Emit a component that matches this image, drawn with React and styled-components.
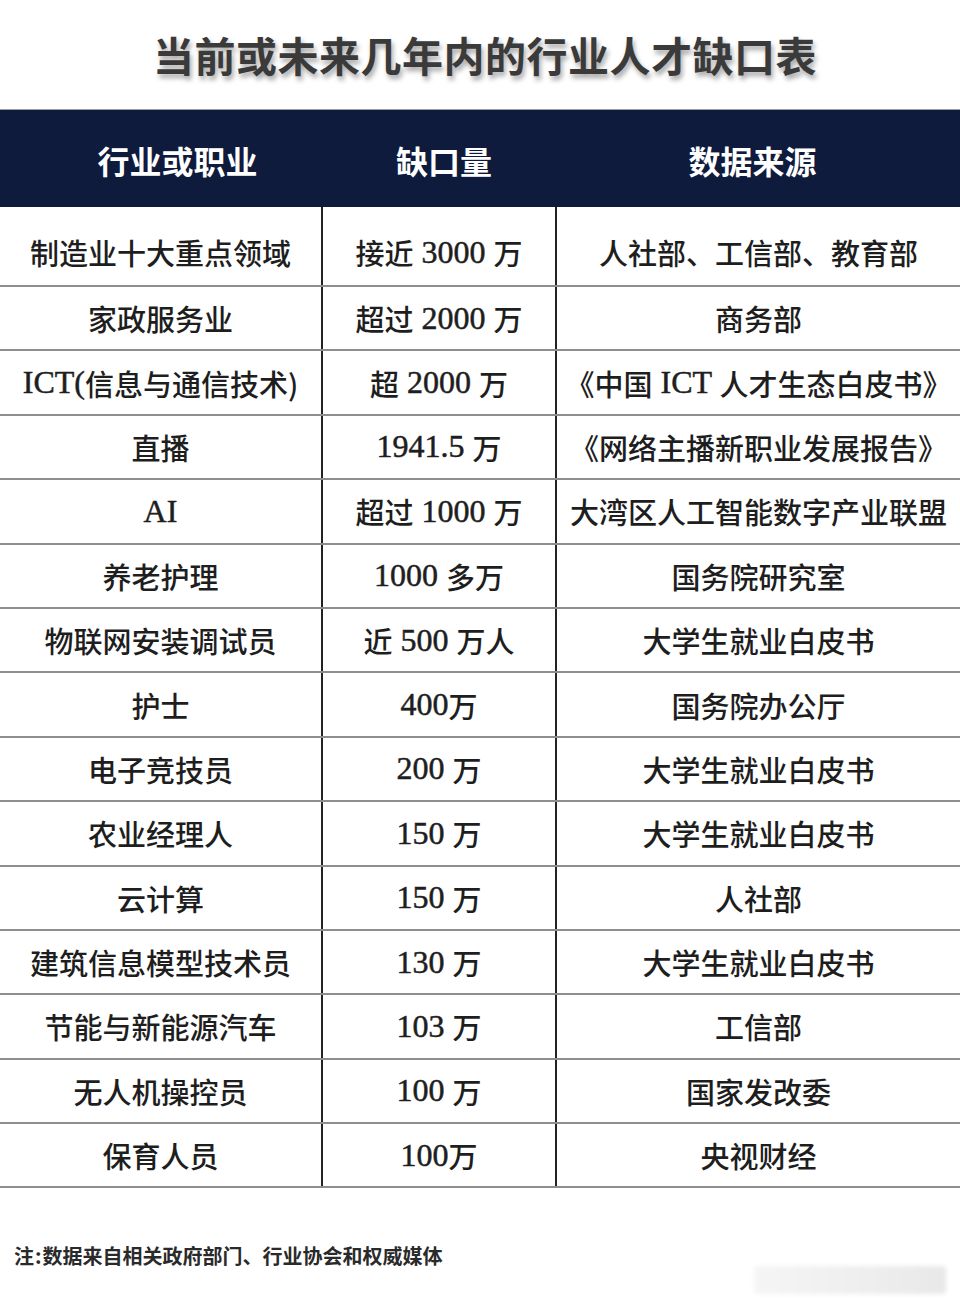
import React from "react";
import styled, { createGlobalStyle } from "styled-components";

const GlobalStyle = createGlobalStyle`
  html, body {
    margin: 0;
    padding: 0;
    background: #fff;
  }
  body {
    font-family: "Liberation Serif", "Noto Sans CJK SC", serif;
    color: #222;
  }
`;

const rows = [
  ["制造业十大重点领域", "接近 3000 万", "人社部、工信部、教育部"],
  ["家政服务业", "超过 2000 万", "商务部"],
  ["ICT(信息与通信技术)", "超 2000 万", "《中国 ICT 人才生态白皮书》"],
  ["直播", "1941.5 万", "《网络主播新职业发展报告》"],
  ["AI", "超过 1000 万", "大湾区人工智能数字产业联盟"],
  ["养老护理", "1000 多万", "国务院研究室"],
  ["物联网安装调试员", "近 500 万人", "大学生就业白皮书"],
  ["护士", "400万", "国务院办公厅"],
  ["电子竞技员", "200 万", "大学生就业白皮书"],
  ["农业经理人", "150 万", "大学生就业白皮书"],
  ["云计算", "150 万", "人社部"],
  ["建筑信息模型技术员", "130 万", "大学生就业白皮书"],
  ["节能与新能源汽车", "103 万", "工信部"],
  ["无人机操控员", "100 万", "国家发改委"],
  ["保育人员", "100万", "央视财经"],
];

// header labels sit a little off the column centres in the original
const heads = [
  { label: "行业或职业", shift: 34 },
  { label: "缺口量", shift: 12 },
  { label: "数据来源", shift: -10 },
];

const Page = styled.div`
  width: 960px;
  height: 1308px;
  display: flex;
  flex-direction: column;
  overflow: hidden;
`;

const Title = styled.h1`
  margin: 0;
  height: 109px;
  display: flex;
  align-items: center;
  justify-content: center;
  padding: 0 0 2px 10px;
  box-sizing: border-box;
  font-family: "Noto Sans CJK SC", sans-serif;
  font-weight: 700;
  font-size: 41px;
  color: #3a3a3a;
  letter-spacing: 0.5px;
  text-shadow: 2px 4px 5px rgba(0, 0, 0, 0.35);
`;

const Table = styled.div`
  display: flex;
  flex-direction: column;
  border-top: 1px solid #9aa0aa;
`;

const Cols = styled.div`
  display: grid;
  grid-template-columns: 321px 234px 405px;
`;

const HeadRow = styled(Cols)`
  height: 97px;
  background: #0f1b3d;
`;

const HeadCell = styled.div`
  display: flex;
  align-items: center;
  justify-content: center;
  font-family: "Noto Sans CJK SC", sans-serif;
  font-weight: 700;
  font-size: 32px;
  color: #fff;
  padding-top: 2px;
  padding-left: ${(p) => Math.max(p.$shift, 0)}px;
  padding-right: ${(p) => Math.max(-p.$shift, 0)}px;
`;

const Row = styled(Cols)`
  height: ${(p) => (p.$first ? "80px" : "64.4px")};
  box-sizing: border-box;
  border-bottom: 2px solid #8e8e8e;
`;

const Cell = styled.div`
  display: flex;
  align-items: center;
  justify-content: center;
  white-space: nowrap;
  font-family: "Noto Sans CJK SC", sans-serif;
  font-size: 29px;
  font-weight: 500;
  color: #1e1e1e;
  padding-top: ${(p) => (p.$first ? "12px" : "0")};
  border-left: ${(p) => (p.$divider ? "2px solid #222" : "none")};
  box-sizing: border-box;
`;

const Latin = styled.span`
  font-family: "Liberation Serif", serif;
  font-size: 32px;
  font-weight: 400;
  -webkit-text-stroke: 0.5px #1e1e1e;
  white-space: pre;
`;

const Footer = styled.div`
  flex: 1;
  display: flex;
  align-items: flex-start;
  justify-content: space-between;
  padding: 54px 14px 0 14px;
`;

const Note = styled.p`
  margin: 0;
  font-family: "Noto Sans CJK SC", sans-serif;
  font-weight: 700;
  font-size: 20px;
  line-height: 28px;
  color: #2a2a2a;
`;

const Colon = styled.span`
  margin: 0 1px;
`;

const Smudge = styled.div`
  width: 192px;
  height: 28px;
  margin-top: 24px;
  border-radius: 4px;
  background: linear-gradient(90deg, #f5f5f5, #eeeeee 60%, #e8e8e8);
  filter: blur(2px);
`;

function renderText(text) {
  return text
    .split(/([A-Za-z0-9.() ]+)/)
    .filter(Boolean)
    .map((part, k) =>
      /[A-Za-z0-9]/.test(part) ? <Latin key={k}>{part}</Latin> : part
    );
}

export default function App() {
  return (
    <Page>
      <GlobalStyle />
      <Title>当前或未来几年内的行业人才缺口表</Title>
      <Table>
        <HeadRow>
          {heads.map((h) => (
            <HeadCell key={h.label} $shift={h.shift}>
              {h.label}
            </HeadCell>
          ))}
        </HeadRow>
        {rows.map((r, i) => (
          <Row key={r[0]} $first={i === 0}>
            {r.map((text, j) => (
              <Cell key={j} $first={i === 0} $divider={j > 0}>
                {renderText(text)}
              </Cell>
            ))}
          </Row>
        ))}
      </Table>
      <Footer>
        <Note>
          注<Colon>:</Colon>数据来自相关政府部门、行业协会和权威媒体
        </Note>
        <Smudge />
      </Footer>
    </Page>
  );
}
